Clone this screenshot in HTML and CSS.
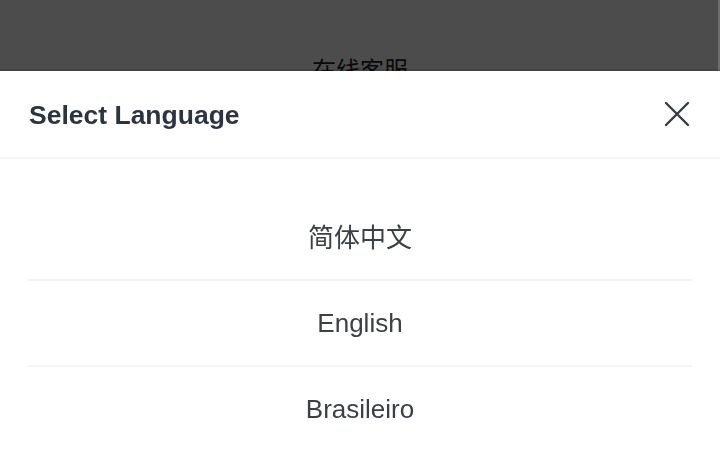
FILE: index.html
```html
<!DOCTYPE html>
<html lang="zh-CN">
<head>
<meta charset="utf-8">
<title>Select Language</title>
<link rel="stylesheet" href="styles.css">
</head>
<body>
<main class="page">
  <div class="page-title">在线客服</div>
</main>
<div class="overlay"></div>
<section class="sheet">
  <header class="sheet-header">
    <h2 class="sheet-title">Select Language</h2>
    <button class="close" aria-label="Close">
      <svg width="26" height="26" viewBox="0 0 26 26" fill="none" stroke="#363b44" stroke-width="2.4" stroke-linecap="round">
        <path d="M2 2 L24 24 M24 2 L2 24"/>
      </svg>
    </button>
  </header>
  <ul class="lang-list">
    <li class="lang-item lang-cjk">简体中文</li>
    <li class="lang-item">English</li>
    <li class="lang-item">Brasileiro</li>
  </ul>
</section>
</body>
</html>
```
FILE: styles.css
```css
* { box-sizing: border-box; }
html, body {
  margin: 0;
  padding: 0;
  width: 720px;
  height: 450px;
  overflow: hidden;
  font-family: "Liberation Sans", Arial, "Noto Sans CJK SC", sans-serif;
  background: #ffffff;
}
.page {
  padding-top: 52px;
  text-align: center;
}
.page-title {
  font-family: "Noto Sans CJK SC", sans-serif;
  font-size: 24px;
  line-height: 34px;
  color: #222;
}
.overlay {
  position: fixed;
  inset: 0;
  background: rgba(0, 0, 0, 0.7);
  box-shadow: inset -2px 0 0 rgba(255, 255, 255, 0.18);
}
.sheet {
  position: fixed;
  left: 0;
  right: 0;
  top: 71px;
  bottom: 0;
  background: #ffffff;
  box-shadow: 0 -2px 0 rgba(0, 0, 0, 0.12);
}
.sheet-header {
  height: 88px;
  padding: 0 30px 0 29px;
  display: flex;
  align-items: center;
  justify-content: space-between;
  border-bottom: 2px solid #f4f4f5;
}
.sheet-title {
  margin: 0;
  padding-top: 2px;
  font-size: 26.5px;
  font-weight: bold;
  color: #2b3440;
  letter-spacing: 0;
}
.close {
  border: 0;
  background: none;
  padding: 0;
  width: 26px;
  height: 26px;
  display: flex;
}
.lang-list {
  list-style: none;
  margin: 0;
  padding: 36px 0 0;
}
.lang-item {
  margin: 0 28px;
  height: 86px;
  display: flex;
  align-items: center;
  justify-content: center;
  font-size: 26px;
  color: #3b4048;
  border-bottom: 2px solid #f4f4f5;
}
.lang-cjk {
  font-family: "Noto Sans CJK SC", sans-serif;
  font-size: 26px;
  padding-bottom: 3px;
}
```
